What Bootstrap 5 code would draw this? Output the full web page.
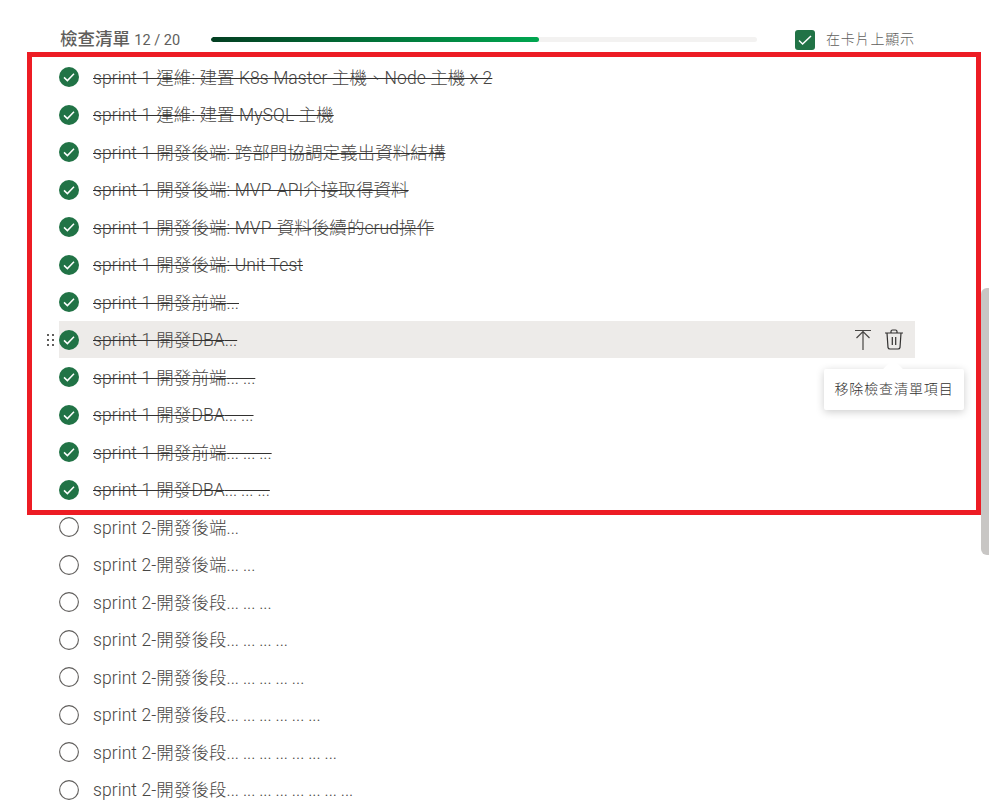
<!DOCTYPE html>
<html lang="zh-Hant">
<head>
<meta charset="utf-8">
<title>檢查清單</title>
<link href="https://cdn.jsdelivr.net/npm/bootstrap@5.3.0/dist/css/bootstrap.min.css" rel="stylesheet">
<style>
html,body{height:808px;overflow:hidden;background:#fff}
body{font-family:Roboto,"Noto Sans CJK TC",sans-serif;color:#605e5c;position:relative}
.sheet{padding:21px 74px 0 59px}
.head-row{height:37.400px}
.head-title{font-size:17.500px;font-weight:500;color:#605e5c;width:152px;white-space:nowrap;line-height:38px;padding-left:1px}
.head-count{font-size:14.500px;font-weight:400}
.meter{width:546px;height:5px;background:#f3f2f1;border-radius:3px;overflow:hidden}
.meter-fill{height:100%;border-radius:3px;background:linear-gradient(90deg,#033f22,#00a650)}
.show-box{margin-left:38px;width:20px;height:20px;border-radius:3px;background:#217346}
.show-text{font-size:14px;font-weight:300;margin-left:11px;color:#605e5c;letter-spacing:.8px;white-space:nowrap}
.item-row{height:37.5px;position:relative;font-size:17.500px}
.item-row.on{background:#edebe9}
.tick{width:20px;height:20px;flex:none;margin-right:14px}
.item-text{color:#484644;font-weight:300;white-space:nowrap;padding-top:1px;letter-spacing:.07px}
.dots{word-spacing:-.3px;letter-spacing:-.05px}
.done .item-text{text-decoration:line-through;text-decoration-color:#323130}
.grip{position:absolute;left:-13px;top:12px;width:9px;height:14px}
.tools{gap:14px;margin-right:12px}
.tip{position:absolute;left:765px;top:48px;width:140px;height:41px;background:#fff;border-radius:2px;box-shadow:0 2px 8px rgba(0,0,0,.2);font-size:14px;font-weight:300;letter-spacing:.9px;color:#323130;white-space:nowrap;z-index:3}
.tip-arrow{position:absolute;left:62px;top:-7px;width:14px;height:14px;background:#fff;transform:rotate(45deg)}
.tip-label{position:relative}
.annot{position:absolute;left:27px;top:52px;width:954px;height:463px;border:5px solid #ed1c24;pointer-events:none;z-index:2}
.scroll-thumb{position:absolute;left:981px;top:288px;width:8px;height:267px;background:#c8c6c4;border-radius:6px 0 0 6px}
</style>
</head>
<body>
<div class="sheet">
  <div class="head-row d-flex align-items-center">
    <div class="head-title">檢查清單 <span class="head-count">12 / 20</span></div>
    <div class="meter"><div class="meter-fill" style="width:60%"></div></div>
    <div class="show-box d-flex align-items-center justify-content-center">
      <svg width="14" height="14" viewBox="0 0 14 14" fill="none" stroke="#fff" stroke-width="1.5"><path d="M1 7.500l3.600 3.500L13 3"/></svg>
    </div>
    <div class="show-text">在卡片上顯示</div>
  </div>

  <svg width="0" height="0" class="position-absolute">
    <defs>
      <symbol id="okay" viewBox="0 0 20 20"><circle cx="10" cy="10" r="10" fill="#217346"/><path d="M5 10.400l3.400 3.200 6.600-6.800" fill="none" stroke="#fff" stroke-width="1.5"/></symbol>
      <symbol id="open" viewBox="0 0 20 20"><circle cx="10" cy="10" r="9.400" fill="none" stroke="#605e5c" stroke-width="1.100"/></symbol>
    </defs>
  </svg>

  <div class="item-row done d-flex align-items-center"><svg class="tick"><use href="#okay"/></svg><span class="item-text">sprint 1-運維: 建置 K8s Master 主機、Node 主機 x 2</span></div>
  <div class="item-row done d-flex align-items-center"><svg class="tick"><use href="#okay"/></svg><span class="item-text">sprint 1-運維: 建置 MySQL 主機</span></div>
  <div class="item-row done d-flex align-items-center"><svg class="tick"><use href="#okay"/></svg><span class="item-text">sprint 1-開發後端: 跨部門協調定義出資料結構</span></div>
  <div class="item-row done d-flex align-items-center"><svg class="tick"><use href="#okay"/></svg><span class="item-text">sprint 1-開發後端: MVP-API介接取得資料</span></div>
  <div class="item-row done d-flex align-items-center"><svg class="tick"><use href="#okay"/></svg><span class="item-text">sprint 1-開發後端: MVP-資料後續的crud操作</span></div>
  <div class="item-row done d-flex align-items-center"><svg class="tick"><use href="#okay"/></svg><span class="item-text">sprint 1-開發後端: Unit Test</span></div>
  <div class="item-row done d-flex align-items-center"><svg class="tick"><use href="#okay"/></svg><span class="item-text">sprint 1-開發前端<span class="dots">...</span></span></div>
  <div class="item-row on done d-flex align-items-center">
    <svg class="grip" viewBox="0 0 9 14" fill="#605e5c"><rect x="1" y="1" width="2" height="2"/><rect x="6" y="1" width="2" height="2"/><rect x="1" y="6" width="2" height="2"/><rect x="6" y="6" width="2" height="2"/><rect x="1" y="11" width="2" height="2"/><rect x="6" y="11" width="2" height="2"/></svg>
    <svg class="tick"><use href="#okay"/></svg><span class="item-text">sprint 1-開發DBA<span class="dots">...</span></span>
    <div class="tools d-flex align-items-center ms-auto">
      <svg width="16" height="22" viewBox="0 0 16 22" fill="none" stroke="#484644" stroke-width="1.2"><path d="M0 1.500h16M8 21V2M1.500 9L8 2.500 14.500 9"/></svg>
      <svg width="18" height="21" viewBox="0 0 18 21" fill="none" stroke="#323130" stroke-width="1.2"><path d="M0 4h18M6 4V2.500A1.500 1.500 0 0 1 7.500 1h3A1.500 1.500 0 0 1 12 2.500V4M2 4l1 14.500A2 2 0 0 0 5 20h8a2 2 0 0 0 2-1.500L16 4M7.300 8v8M10.700 8v8"/></svg>
    </div>
    <div class="tip d-flex align-items-center justify-content-center">
      <div class="tip-arrow"></div><span class="tip-label">移除檢查清單項目</span>
    </div>
  </div>
  <div class="item-row done d-flex align-items-center"><svg class="tick"><use href="#okay"/></svg><span class="item-text">sprint 1-開發前端<span class="dots">... ...</span></span></div>
  <div class="item-row done d-flex align-items-center"><svg class="tick"><use href="#okay"/></svg><span class="item-text">sprint 1-開發DBA<span class="dots">... ...</span></span></div>
  <div class="item-row done d-flex align-items-center"><svg class="tick"><use href="#okay"/></svg><span class="item-text">sprint 1-開發前端<span class="dots">... ... ...</span></span></div>
  <div class="item-row done d-flex align-items-center"><svg class="tick"><use href="#okay"/></svg><span class="item-text">sprint 1-開發DBA<span class="dots">... ... ...</span></span></div>
  <div class="item-row d-flex align-items-center"><svg class="tick"><use href="#open"/></svg><span class="item-text">sprint 2-開發後端<span class="dots">...</span></span></div>
  <div class="item-row d-flex align-items-center"><svg class="tick"><use href="#open"/></svg><span class="item-text">sprint 2-開發後端<span class="dots">... ...</span></span></div>
  <div class="item-row d-flex align-items-center"><svg class="tick"><use href="#open"/></svg><span class="item-text">sprint 2-開發後段<span class="dots">... ... ...</span></span></div>
  <div class="item-row d-flex align-items-center"><svg class="tick"><use href="#open"/></svg><span class="item-text">sprint 2-開發後段<span class="dots">... ... ... ...</span></span></div>
  <div class="item-row d-flex align-items-center"><svg class="tick"><use href="#open"/></svg><span class="item-text">sprint 2-開發後段<span class="dots">... ... ... ... ...</span></span></div>
  <div class="item-row d-flex align-items-center"><svg class="tick"><use href="#open"/></svg><span class="item-text">sprint 2-開發後段<span class="dots">... ... ... ... ... ...</span></span></div>
  <div class="item-row d-flex align-items-center"><svg class="tick"><use href="#open"/></svg><span class="item-text">sprint 2-開發後段<span class="dots">... ... ... ... ... ... ...</span></span></div>
  <div class="item-row d-flex align-items-center"><svg class="tick"><use href="#open"/></svg><span class="item-text">sprint 2-開發後段<span class="dots">... ... ... ... ... ... ... ...</span></span></div>
</div>
<div class="annot"></div>
<div class="scroll-thumb"></div>
<script src="https://cdn.jsdelivr.net/npm/bootstrap@5.3.0/dist/js/bootstrap.bundle.min.js"></script>
</body>
</html>
